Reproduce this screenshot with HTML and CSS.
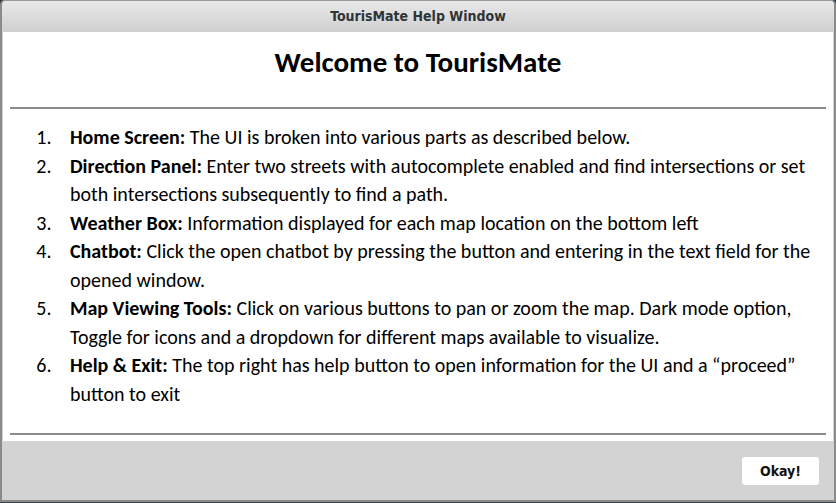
FILE: index.html
```html
<!DOCTYPE html>
<html>
<head>
<meta charset="utf-8">
<link rel="stylesheet" href="styles.css">
</head>
<body>
<div class="window">
  <div class="titlebar">TourisMate Help Window</div>
  <div class="content">
    <h1 class="heading">Welcome to TourisMate</h1>
    <hr class="rule">
    <ol class="items">
      <li><b>Home Screen:</b> The UI is broken into various parts as described below.</li>
      <li><b>Direction Panel:</b> Enter two streets with autocomplete enabled and find intersections or set both intersections subsequently to find a path.</li>
      <li><b>Weather Box:</b> Information displayed for each map location on the bottom left</li>
      <li><b>Chatbot:</b> Click the open chatbot by pressing the button and entering in the text field for the opened window.</li>
      <li><b>Map Viewing Tools:</b> Click on various buttons to pan or zoom the map. Dark mode option, Toggle for icons and a dropdown for different maps available to visualize.</li>
      <li><b>Help &amp; Exit:</b> The top right has help button to open information for the UI and a “proceed” button to exit</li>
    </ol>
    <hr class="rule bottom">
  </div>
  <div class="footer">
    <button class="okay">Okay!</button>
  </div>
</div>
</body>
</html>
```
FILE: styles.css
```css
html, body {
  margin: 0;
  padding: 0;
  width: 836px;
  height: 503px;
  overflow: hidden;
  background: #2b3a2f;
}
.window {
  width: 832px;
  height: 499px;
  border: 2px solid #8a8a8a;
  border-top: 1px solid #9a9a9a;
  border-radius: 5px 5px 0 0;
  background: #d3d3d3;
  display: flex;
  flex-direction: column;
  box-shadow: 0 0 0 1px #3c4650;
}
.titlebar {
  height: 31px;
  line-height: 31px;
  text-align: center;
  font-family: "DejaVu Sans Condensed", "DejaVu Sans", sans-serif;
  font-stretch: condensed;
  font-size: 14px;
  font-weight: 600;
  color: #2e3436;
  background: linear-gradient(#e8e8e8, #d0d0d0);
  border-radius: 4px 4px 0 0;
}
.content {
  background: #fff;
  margin: 0 1px;
  padding: 0 7px;
  height: 409px;
  display: flex;
  flex-direction: column;
  font-family: "Carlito", "Lato", sans-serif;
  color: #000;
}
.heading {
  margin: 12px 0 0;
  height: 36px;
  font-size: 29px;
  line-height: 36px;
  text-align: center;
  font-weight: bold;
}
.rule {
  border: 0;
  border-top: 2px solid #8c8c8c;
  margin: 27px 0 0;
  height: 0;
}
.items {
  margin: 14px 0 0;
  padding: 0 0 0 46px;
  font-size: 20px;
  line-height: 28.5px;
  flex: 1;
}
.items li {
  padding-left: 14px;
}
.items li::marker {
  font-weight: normal;
}
.bottom {
  margin: 0 0 6px;
}
.footer {
  flex: 1;
  display: flex;
  justify-content: flex-end;
  align-items: flex-start;
  padding: 16px 15px 0 0;
}
.okay {
  width: 77px;
  height: 28px;
  border: 0;
  border-radius: 3px;
  background: #fff;
  font-family: "DejaVu Sans Condensed", "DejaVu Sans", sans-serif;
  font-stretch: condensed;
  font-size: 14px;
  font-weight: bold;
  color: #111;
  padding: 0;
}
```
